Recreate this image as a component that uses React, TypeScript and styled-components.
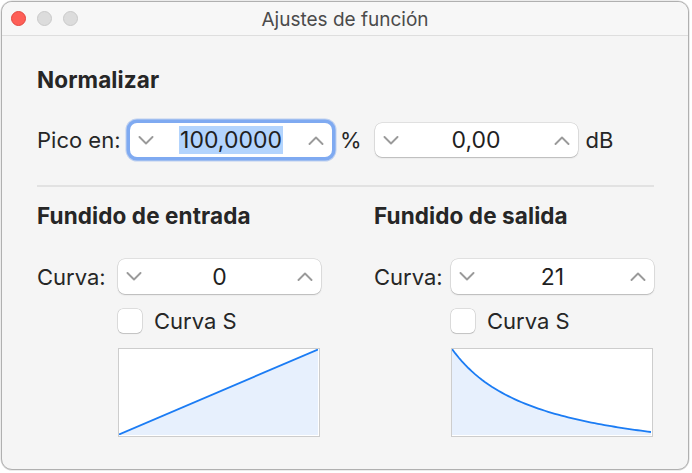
import React from "react";
import styled, { createGlobalStyle } from "styled-components";

const Global = createGlobalStyle`
  html, body { margin: 0; padding: 0; background: #ffffff; }
  body { font-family: Inter, "Noto Sans", sans-serif; -webkit-font-smoothing: antialiased; }
  #root { width: 692px; height: 473px; }
`;

const Page = styled.div`
  width: 692px;
  height: 473px;
  padding: 1px 0 0 1px;
  box-sizing: border-box;
`;

const Window = styled.div`
  width: 688px;
  height: 469px;
  box-sizing: border-box;
  border: 1px solid #b0b0b0;
  border-radius: 11px;
  background: #f5f5f5;
  overflow: hidden;
  display: flex;
  flex-direction: column;
  box-shadow: 0 0 0 0.5px rgba(0, 0, 0, 0.15);
`;

const TitleBar = styled.div`
  position: relative;
  height: 33px;
  flex: none;
  background: #f7f7f7;
  border-bottom: 1px solid #dedede;
  display: flex;
  align-items: center;
  justify-content: center;
`;

const Lights = styled.div`
  position: absolute;
  left: 9px;
  top: 9px;
  display: flex;
  gap: 11px;
`;

const Light = styled.span<{ $color: string; $edge: string }>`
  width: 15px;
  height: 15px;
  border-radius: 50%;
  box-sizing: border-box;
  background: ${(p) => p.$color};
  border: 1px solid ${(p) => p.$edge};
`;

const Title = styled.div`
  font-size: 19px;
  color: #4b4b4b;
  margin-top: 1px;
`;

const Body = styled.div`
  flex: 1;
  padding: 32px 0 0 35px;
  width: 653px;
  box-sizing: border-box;
  display: flex;
  flex-direction: column;
`;

const Heading = styled.div`
  font-weight: 700;
  font-size: 22.5px;
  line-height: 24px;
  color: #262626;
  letter-spacing: 0.1px;
`;

const Row = styled.div<{ $top: number }>`
  display: flex;
  align-items: center;
  margin-top: ${(p) => p.$top}px;
`;

const Label = styled.span<{ $width?: number }>`
  font-size: 22px;
  color: #262626;
  white-space: nowrap;
  ${(p) => (p.$width ? `width: ${p.$width}px; flex: none;` : "")}
`;

const Unit = styled.span<{ $left: number }>`
  font-size: 22px;
  color: #262626;
  margin-left: ${(p) => p.$left}px;
`;

const Stepper = styled.div<{ $focus?: boolean; $h?: number; $left?: number }>`
  width: ${(p) => (p.$focus ? 202 : 203)}px;
  height: ${(p) => p.$h ?? 34}px;
  margin-left: ${(p) => p.$left ?? 0}px;
  flex: none;
  box-sizing: border-box;
  border-radius: 7px;
  background: #ffffff;
  display: flex;
  align-items: center;
  justify-content: space-between;
  padding: 0 8px;
  box-shadow: ${(p) =>
    p.$focus
      ? "0 0 0 3.5px #7faaf1, 0 0 0 4.5px rgba(90,140,230,0.35)"
      : "0 0 0 0.5px rgba(0,0,0,0.16), 0 1px 1.5px rgba(0,0,0,0.18)"};
`;

const Value = styled.span<{ $selected?: boolean }>`
  font-size: 23px;
  color: #1f1f1f;
  line-height: 28px;
  padding: 0 1px;
  background: ${(p) => (p.$selected ? "#b3d4fd" : "transparent")};
`;

const Divider = styled.div`
  height: 2px;
  width: 617px;
  background: #e2e2e2;
  margin-top: 28px;
`;

const Columns = styled.div`
  display: flex;
  margin-top: 17px;
`;

const Column = styled.div<{ $width: number }>`
  width: ${(p) => p.$width}px;
  flex: none;
  display: flex;
  flex-direction: column;
`;

const Indented = styled.div<{ $indent: number; $top: number }>`
  margin-left: ${(p) => p.$indent}px;
  margin-top: ${(p) => p.$top}px;
  display: flex;
  align-items: center;
`;

const Check = styled.span`
  width: 24px;
  height: 24px;
  box-sizing: border-box;
  border-radius: 5px;
  background: #ffffff;
  box-shadow: 0 0 0 0.5px rgba(0,0,0,0.2), 0 1px 1px rgba(0,0,0,0.12);
  flex: none;
`;

const CheckText = styled.span`
  font-size: 22px;
  color: #262626;
  margin-left: 12px;
`;

const Graph = styled.div`
  width: 202px;
  height: 89px;
  box-sizing: border-box;
  border: 1.5px solid #cdcdcd;
  background: #ffffff;
  svg { display: block; }
`;

const Chevron = ({ up }: { up?: boolean }) => (
  <svg width="16" height="9" viewBox="0 0 16 9">
    <path
      d={up ? "M1.5 8 L8 1.5 L14.5 8" : "M1.5 1 L8 7.5 L14.5 1"}
      fill="none"
      stroke="#9a9a9a"
      strokeWidth="1.9"
      strokeLinecap="round"
      strokeLinejoin="round"
    />
  </svg>
);

const NumStepper = ({
  value,
  focus,
  h,
  left,
}: {
  value: string;
  focus?: boolean;
  h?: number;
  left?: number;
}) => (
  <Stepper $focus={focus} $h={h} $left={left}>
    <Chevron />
    <Value $selected={focus}>{value}</Value>
    <Chevron up />
  </Stepper>
);

const W = 199;
const H = 86;

const LinearGraph = () => (
  <Graph>
    <svg width={W} height={H} viewBox={`0 0 ${W} ${H}`}>
      <path d={`M0 ${H} L${W} 0 L${W} ${H} Z`} fill="#e7f0fd" />
      <path d={`M0 ${H - 0.5} L${W} 0.5`} stroke="#1b7cf4" strokeWidth="1.8" fill="none" />
    </svg>
  </Graph>
);

const decayPath = () => {
  const k = 0.43;
  const pts: string[] = [];
  for (let i = 0; i <= 60; i++) {
    const x = i / 60;
    const y = ((x * (1 + k)) / (x + k)) * 0.965;
    pts.push(`${(x * W).toFixed(2)} ${(y * H).toFixed(2)}`);
  }
  return pts;
};

const DecayGraph = () => {
  const pts = decayPath();
  const line = "M" + pts.join(" L");
  return (
    <Graph>
      <svg width={W} height={H} viewBox={`0 0 ${W} ${H}`}>
        <path d={`${line} L${W} ${H} L0 ${H} Z`} fill="#e7f0fd" />
        <path d={line} stroke="#1b7cf4" strokeWidth="1.8" fill="none" />
      </svg>
    </Graph>
  );
};

const FadeColumn = ({
  title,
  value,
  labelWidth,
  width,
  graph,
}: {
  title: string;
  value: string;
  labelWidth: number;
  width: number;
  graph: React.ReactNode;
}) => (
  <Column $width={width}>
    <Heading>{title}</Heading>
    <Row $top={31}>
      <Label $width={labelWidth}>Curva:</Label>
      <NumStepper value={value} h={35} />
    </Row>
    <Indented $indent={labelWidth} $top={14}>
      <Check />
      <CheckText>Curva S</CheckText>
    </Indented>
    <Indented $indent={labelWidth} $top={14}>
      {graph}
    </Indented>
  </Column>
);

export default function App() {
  return (
    <Page>
      <Global />
      <Window>
        <TitleBar>
          <Lights>
            <Light $color="#fe5f57" $edge="#e2463f" />
            <Light $color="#dcdcdc" $edge="#c9c9c9" />
            <Light $color="#dcdcdc" $edge="#c9c9c9" />
          </Lights>
          <Title>Ajustes de función</Title>
        </TitleBar>
        <Body>
          <Heading>Normalizar</Heading>
          <Row $top={31}>
            <Label $width={93}>Pico en:</Label>
            <NumStepper value="100,0000" focus />
            <Unit $left={8}>%</Unit>
            <NumStepper value="0,00" left={13} />
            <Unit $left={8}>dB</Unit>
          </Row>
          <Divider />
          <Columns>
            <FadeColumn
              title="Fundido de entrada"
              value="0"
              labelWidth={81}
              width={337}
              graph={<LinearGraph />}
            />
            <FadeColumn
              title="Fundido de salida"
              value="21"
              labelWidth={77}
              width={280}
              graph={<DecayGraph />}
            />
          </Columns>
        </Body>
      </Window>
    </Page>
  );
}
